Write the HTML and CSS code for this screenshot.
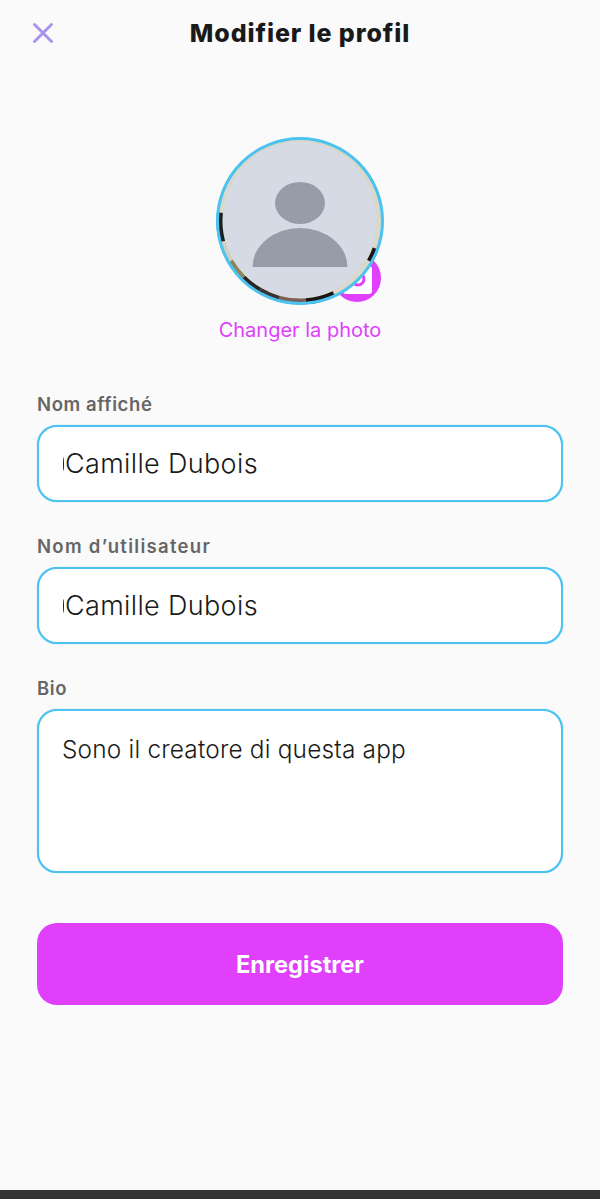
FILE: index.html
```html
<!DOCTYPE html>
<html lang="fr">

<head>
  <meta charset="UTF-8">
  <meta name="viewport" content="width=device-width, initial-scale=1.0">
  <title>Modifier le profil</title>
  <link rel="stylesheet" href="styles.css">
</head>

<body>
  <div class="screen">
    <header class="topbar">
      <button class="close-btn" aria-label="Fermer">
        <svg width="24" height="24" viewBox="0 0 24 24" fill="none" stroke="#a893ee" stroke-width="3" stroke-linecap="round">
          <path d="M3.500 3.500 20.500 20.500M20.500 3.500 3.500 20.500" />
        </svg>
      </button>
      <h1 class="title">Modifier le profil</h1>
    </header>

    <section class="photo">
      <div class="avatar">
        <div class="badge">
          <svg width="48" height="48" viewBox="0 0 48 48">
            <path fill="#fff" d="M13 12h5l2-3h10l2 3h4a3 3 0 0 1 3 3v22a3 3 0 0 1-3 3H13a3 3 0 0 1-3-3V15a3 3 0 0 1 3-3z" />
            <circle cx="25" cy="25" r="6" fill="none" stroke="#e040fb" stroke-width="3" />
          </svg>
        </div>
        <svg class="avatar-img" width="168" height="168" viewBox="0 0 168 168" fill="none">
          <circle cx="84" cy="84" r="82" fill="#d8d8cc" />
          <!-- bord de la vraie photo qui depasse -->
          <g class="fringe" stroke-width="6">
            <path stroke="#1c2022" d="M3.900 75.600A80.500 80.500 0 0 0 6.200 104.800" />
            <path stroke="#cfcfc4" d="M6.200 104.800A80.500 80.500 0 0 0 14.300 124.300" />
            <path stroke="#8d8560" d="M14.300 124.300A80.500 80.500 0 0 0 27.100 140.900" />
            <path stroke="#2a2526" d="M27.100 140.900A80.500 80.500 0 0 0 43.800 153.700" />
            <path stroke="#3a3230" d="M43.800 153.700A80.500 80.500 0 0 0 63.200 161.800" />
            <path stroke="#7a6058" d="M63.200 161.800A80.500 80.500 0 0 0 90 164.300" />
            <path stroke="#1a1618" d="M90 164.300A80.500 80.500 0 0 0 118 157" />
            <path stroke="#1a1618" d="M159.600 111.500A80.500 80.500 0 0 1 153.700 124.300" />
          </g>
          <circle cx="84" cy="84" r="82.500" stroke="#4cc2ee" stroke-width="3" />
          <ellipse cx="83.500" cy="83" rx="76.500" ry="78" fill="#d6dae4" />
          <ellipse cx="84" cy="66" rx="25" ry="21" fill="#979ca8" />
          <path fill="#979ca8" d="M36.500 130A47.500 39 0 0 1 131.500 130z" />
        </svg>
      </div>
      <a class="photo-link">Changer la photo</a>
    </section>

    <form class="form">
      <div class="field">
        <label class="field-label">Nom affiché</label>
        <div class="box">
          <span class="mark"></span>
          <input class="box-input" type="text" value="Camille Dubois">
        </div>
      </div>
      <div class="field">
        <label class="field-label wide">Nom d’utilisateur</label>
        <div class="box">
          <span class="mark"></span>
          <input class="box-input" type="text" value="Camille Dubois">
        </div>
      </div>
      <div class="field">
        <label class="field-label">Bio</label>
        <textarea class="box bio">Sono il creatore di questa app</textarea>
      </div>
      <button class="save" type="button">Enregistrer</button>
    </form>
  </div>
  <div class="navbar"></div>
</body>

</html>
```

FILE: styles.css
```css
* {
  box-sizing: border-box;
}

html,
body {
  height: 100%;
}

body {
  margin: 0;
  background-color: #fafafa;
  font-family: Inter, "Noto Sans", sans-serif;
  color: #1a1a1a;
  display: flex;
  flex-direction: column;
}

.screen {
  flex: 1;
  padding: 0 37px;
}

.topbar {
  height: 66px;
  display: flex;
  align-items: center;
  justify-content: center;
  position: relative;
}

.close-btn {
  position: absolute;
  left: -6px;
  top: 21px;
  width: 24px;
  height: 24px;
  padding: 0;
  border: none;
  background: none;
}

.title {
  margin: 0;
  font-size: 25px;
  font-weight: 800;
  line-height: 32px;
  letter-spacing: 0.9px;
}

.photo {
  margin-top: 71px;
  display: flex;
  flex-direction: column;
  align-items: center;
}

.avatar {
  width: 168px;
  height: 168px;
  position: relative;
}

.avatar-img {
  display: block;
  position: relative;
}

.fringe {
  filter: blur(0.5px);
}

.badge {
  position: absolute;
  left: 117px;
  top: 117px;
  width: 48px;
  height: 48px;
  border-radius: 50%;
  background-color: #e040fb;
}

.badge svg {
  display: block;
}

.photo-link {
  margin-top: 13px;
  font-size: 20px;
  line-height: 24px;
  color: #e040fb;
}

.form {
  margin-top: 50px;
}

.field {
  margin-bottom: 32px;
}

.field-label {
  display: block;
  font-size: 18.500px;
  font-weight: 600;
  line-height: 24px;
  letter-spacing: 0.6px;
  color: #666;
  margin-bottom: 9px;
}

.field-label.wide {
  letter-spacing: 1.300px;
}

.box {
  display: flex;
  align-items: center;
  width: 100%;
  height: 77px;
  padding: 0 24px;
  background-color: #fff;
  border: 2px solid #4cc2ee;
  border-radius: 20px;
  box-shadow: 0 0 1px #4cc2ee;
}

.mark {
  width: 2px;
  height: 14px;
  border-left: 1.500px solid #222;
  border-radius: 50%;
}

.box-input {
  flex: 1;
  min-width: 0;
  padding: 0;
  border: none;
  outline: none;
  background: none;
  font: inherit;
  font-size: 27px;
  font-weight: 350;
  letter-spacing: 0.35px;
  color: #1a1a1a;
}

.bio {
  display: block;
  height: 164px;
  padding: 22px 23px;
  font: inherit;
  font-size: 24.400px;
  font-weight: 350;
  letter-spacing: 0.2px;
  line-height: 32px;
  color: #1a1a1a;
  resize: none;
  outline: none;
}

.save {
  display: block;
  width: 100%;
  height: 82px;
  margin-top: 50px;
  border: none;
  border-radius: 20px;
  background-color: #e040fb;
  color: #fff;
  font: inherit;
  font-size: 23.600px;
  font-weight: 700;
}

.navbar {
  height: 9px;
  background-color: #333;
}
```
